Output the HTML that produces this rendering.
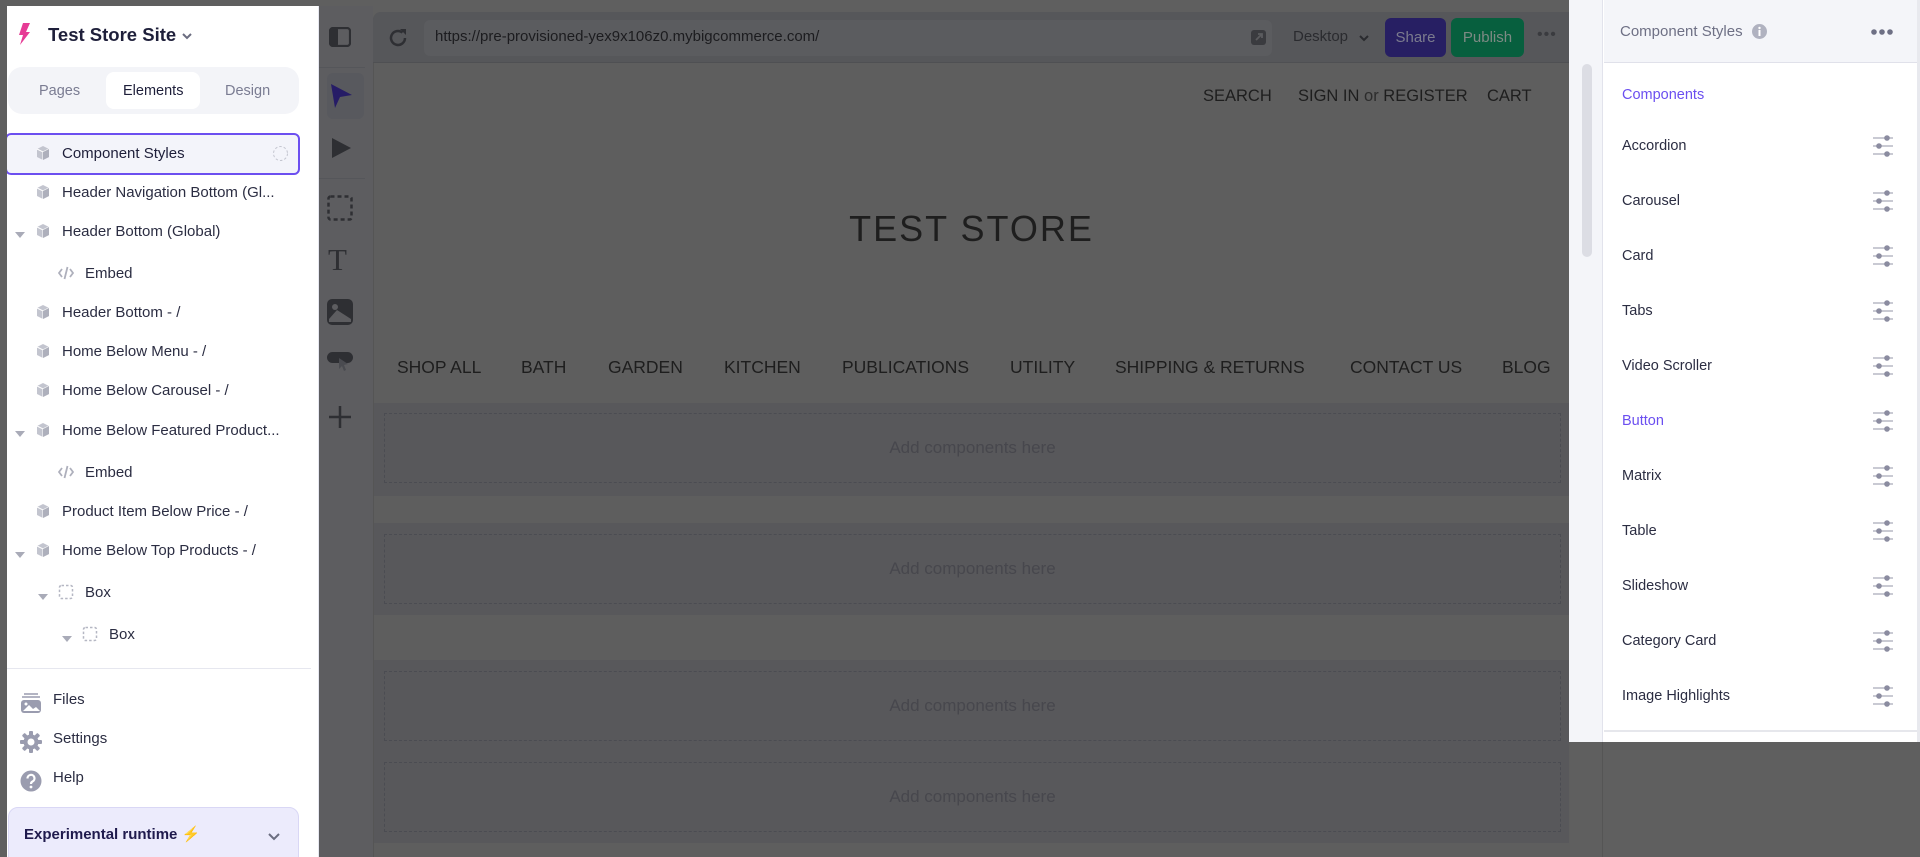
<!DOCTYPE html>
<html style="overflow:hidden;height:857px"><head><meta charset="utf-8"><style>
*{box-sizing:border-box;margin:0;padding:0}
body{width:1920px;height:857px;overflow:hidden;background:#5f5f5f;font-family:"Liberation Sans",sans-serif;position:relative}
.a{position:absolute;white-space:nowrap}
#left{position:absolute;left:7px;top:6px;width:312px;height:851px;background:#fff;border-right:1px solid #e6e7f0;overflow:hidden}
.tree{color:#2b2d42;font-size:15px}
.cube{position:absolute;width:16px;height:16px}
.tri{position:absolute;width:0;height:0;border-left:5px solid transparent;border-right:5px solid transparent;border-top:6px solid #a9abb8}
.nav{font-size:17.5px;color:#1e1e1e;top:357px}
.sec{position:absolute;left:374px;width:1195px;background:#58585b}
.dash{position:absolute;left:384px;width:1177px;height:70px;border:1px dashed #4b4c52;color:#47474d;font-size:17px;text-align:center;line-height:68px}
.ri{position:absolute;left:1622px;font-size:14.5px;color:#2b2d42}
.sl{position:absolute;left:1872px;width:22px;height:22px}
</style></head><body>
<svg width="0" height="0" style="position:absolute"><defs>
<symbol id="cube" viewBox="0 0 16 16"><path d="M8 1l6 3v8l-6 3-6-3V4z" fill="#c3c5cf"/><path d="M2 4l6 3 6-3" fill="none" stroke="#fff" stroke-width="1"/><path d="M8 7v8" stroke="#fff" stroke-width="1"/><path d="M8 7l6-3v8l-6 3z" fill="#aeb0bc"/></symbol>
<symbol id="sl" viewBox="0 0 22 22"><g stroke="#c9cad3" stroke-width="2"><path d="M1 3h20M1 11h20M1 19h20"/></g><g fill="#8b8ca0"><circle cx="15" cy="3" r="2.8"/><circle cx="7" cy="11" r="2.8"/><circle cx="15" cy="19" r="2.8"/></g></symbol>
<symbol id="embed" viewBox="0 0 16 16"><path d="M4 4L1 8l3 4M12 4l3 4-3 4M9.5 2L6.5 14" fill="none" stroke="#aeb0bc" stroke-width="1.8"/></symbol>
<symbol id="box" viewBox="0 0 16 16"><rect x="1.5" y="1.5" width="13" height="13" rx="2" fill="none" stroke="#b5b7c3" stroke-width="1.5" stroke-dasharray="2.5 2"/></symbol>
</defs></svg>

<!-- canvas area -->
<div class="a" style="left:373px;top:12px;width:1197px;height:845px;background:#5e5e5e;border-radius:8px 0 0 0;border-left:1px solid #555"></div>
<div class="a" style="left:373px;top:12px;width:1197px;height:51px;background:#56575a;border-radius:8px 0 0 0;border-bottom:1px solid #4f5053"></div>
<svg class="a" style="left:386px;top:26px" width="24" height="24" viewBox="0 0 24 24"><path d="M19 12a7 7 0 1 1-2.5-5.4" fill="none" stroke="#2e2f33" stroke-width="2.5"/><path d="M14 3h6v6z" fill="#2e2f33"/></svg>
<div class="a" style="left:424px;top:20px;width:848px;height:36px;background:#5b5c5f;border-radius:6px"></div>
<div class="a" style="left:435px;top:28px;font-size:15px;color:#1c1c1f">https://pre-provisioned-yex9x106z0.mybigcommerce.com/</div>
<svg class="a" style="left:1250px;top:29px" width="17" height="17" viewBox="0 0 17 17"><rect x="1" y="1" width="15" height="15" rx="3" fill="#3a3b3f"/><path d="M6 11l6-6M8 5h4v4" stroke="#5b5c5f" stroke-width="1.8" fill="none"/></svg>
<div class="a" style="left:1293px;top:28px;font-size:15px;color:#2a2b2f">Desktop</div>
<svg class="a" style="left:1358px;top:33px" width="12" height="10" viewBox="0 0 12 10"><path d="M2 3l4 4 4-4" stroke="#2a2b2f" stroke-width="2" fill="none"/></svg>
<div class="a" style="left:1385px;top:18px;width:61px;height:39px;background:#271f63;border-radius:6px;color:#7b7b8e;font-size:15px;text-align:center;line-height:39px">Share</div>
<div class="a" style="left:1451px;top:18px;width:73px;height:39px;background:#075f3e;border-radius:6px;color:#7d8a84;font-size:15px;text-align:center;line-height:39px">Publish</div>
<div class="a" style="left:1537px;top:26px;font-size:16px;color:#3a3b3f;letter-spacing:1px">•••</div>

<div class="a" style="left:1203px;top:87px;font-size:16.5px;color:#1e1e1e">SEARCH</div>
<div class="a" style="left:1298px;top:87px;font-size:16.5px;color:#1e1e1e">SIGN IN <span style="color:#2c2c2c">or</span> REGISTER</div>
<div class="a" style="left:1487px;top:87px;font-size:16.5px;color:#1e1e1e">CART</div>
<div class="a" style="left:373px;width:1197px;top:208px;text-align:center;font-size:36px;letter-spacing:2px;color:#1e1e1e">TEST STORE</div>
<div class="a nav" style="left:397px">SHOP ALL</div>
<div class="a nav" style="left:521px">BATH</div>
<div class="a nav" style="left:608px">GARDEN</div>
<div class="a nav" style="left:724px">KITCHEN</div>
<div class="a nav" style="left:842px">PUBLICATIONS</div>
<div class="a nav" style="left:1010px">UTILITY</div>
<div class="a nav" style="left:1115px">SHIPPING &amp; RETURNS</div>
<div class="a nav" style="left:1350px">CONTACT US</div>
<div class="a nav" style="left:1502px">BLOG</div>

<div class="sec" style="top:403px;height:93px"></div>
<div class="sec" style="top:523px;height:92px"></div>
<div class="sec" style="top:660px;height:183px"></div>
<div class="dash" style="top:413px">Add components here</div>
<div class="dash" style="top:534px">Add components here</div>
<div class="dash" style="top:671px">Add components here</div>
<div class="dash" style="top:762px">Add components here</div>

<!-- toolbar -->
<div class="a" style="left:319px;top:6px;width:54px;height:851px;background:#5d5d60"></div>
<svg class="a" style="left:329px;top:27px" width="22" height="20" viewBox="0 0 22 20"><rect x="1" y="1" width="20" height="18" rx="3" fill="none" stroke="#2e2f33" stroke-width="2.2"/><rect x="1" y="1" width="8" height="18" rx="2" fill="#2e2f33"/></svg>
<div class="a" style="left:319px;top:67px;width:46px;height:1px;background:#55565a"></div>
<div class="a" style="left:327px;top:73px;width:37px;height:46px;background:#58595e;border-radius:6px"></div>
<svg class="a" style="left:329px;top:83px" width="24" height="26" viewBox="0 0 24 26"><path d="M2 1l21 11-12 2-5 11z" fill="#261c66"/></svg>
<svg class="a" style="left:331px;top:137px" width="20" height="22" viewBox="0 0 20 22"><path d="M1 1l19 10L1 21z" fill="#2e2f33"/></svg>
<div class="a" style="left:319px;top:178px;width:46px;height:1px;background:#55565a"></div>
<svg class="a" style="left:327px;top:195px" width="26" height="26"><rect x="1.5" y="1.5" width="23" height="23" rx="2" fill="none" stroke="#2e2f33" stroke-width="2.5" stroke-dasharray="4 3"/></svg>
<div class="a" style="left:328px;top:242px;font-family:'Liberation Serif',serif;font-size:31px;color:#2e2f33">T</div>
<svg class="a" style="left:327px;top:299px" width="26" height="26" viewBox="0 0 26 26"><rect x="0" y="0" width="26" height="26" rx="5" fill="#2e2f33"/><path d="M2 20l8-9 14 9v3H2z" fill="#5d5d60"/><circle cx="8" cy="8" r="3" fill="#5d5d60"/></svg>
<svg class="a" style="left:327px;top:352px" width="26" height="24" viewBox="0 0 26 24"><rect x="0" y="0" width="26" height="11" rx="5.5" fill="#2e2f33"/><path d="M12 6l9 6-4 1 2 5-2 1-2-5-3 3z" fill="#4a4b50"/></svg>
<svg class="a" style="left:328px;top:405px" width="24" height="24"><path d="M12 1v22M1 12h22" stroke="#2e2f33" stroke-width="2.5"/></svg>

<!-- left panel -->
<div id="left">
<svg class="a" style="left:10px;top:17px" width="14" height="22" viewBox="0 0 14 22"><path d="M6 0h7L9 9h4L3 22l3-10H2z" fill="#e63b95"/></svg>
<div class="a" style="left:41px;top:18px;font-size:18.5px;color:#1e1f3a;font-weight:bold">Test Store Site</div>
<svg class="a" style="left:174px;top:26px" width="12" height="9" viewBox="0 0 12 9"><path d="M2 2l4 4 4-4" stroke="#6b6d80" stroke-width="2" fill="none"/></svg>
<div class="a" style="left:1px;top:61px;width:291px;height:47px;background:#f3f4f8;border-radius:14px"></div>
<div class="a" style="left:99px;top:66px;width:94px;height:37px;background:#fff;border-radius:8px"></div>
<div class="a" style="left:32px;top:77px;font-size:14.5px;color:#7a7c92">Pages</div>
<div class="a" style="left:116px;top:77px;font-size:14.5px;color:#1e1f3a">Elements</div>
<div class="a" style="left:218px;top:77px;font-size:14.5px;color:#7a7c92">Design</div>

<div class="a" style="left:-2px;top:127px;width:295px;height:42px;background:#f3f4fa;border:2px solid #6c4ff0;border-radius:6px"></div>
<svg class="a" style="left:265px;top:139px" width="17" height="17"><circle cx="8.5" cy="8.5" r="7" fill="none" stroke="#c4c6d0" stroke-dasharray="2.5 2"/></svg>

<div class="tree">
<svg class="cube" style="left:28px;top:139px"><use href="#cube"/></svg><div class="a" style="left:55px;top:139px;color:#1e1f3a">Component Styles</div>
<svg class="cube" style="left:28px;top:178px"><use href="#cube"/></svg><div class="a" style="left:55px;top:178px">Header Navigation Bottom (Gl...</div>
<div class="tri" style="left:8px;top:226px"></div><svg class="cube" style="left:28px;top:217px"><use href="#cube"/></svg><div class="a" style="left:55px;top:217px">Header Bottom (Global)</div>
<svg class="cube" style="left:51px;top:259px"><use href="#embed"/></svg><div class="a" style="left:78px;top:259px">Embed</div>
<svg class="cube" style="left:28px;top:298px"><use href="#cube"/></svg><div class="a" style="left:55px;top:298px">Header Bottom - /</div>
<svg class="cube" style="left:28px;top:337px"><use href="#cube"/></svg><div class="a" style="left:55px;top:337px">Home Below Menu - /</div>
<svg class="cube" style="left:28px;top:376px"><use href="#cube"/></svg><div class="a" style="left:55px;top:376px">Home Below Carousel - /</div>
<div class="tri" style="left:8px;top:425px"></div><svg class="cube" style="left:28px;top:416px"><use href="#cube"/></svg><div class="a" style="left:55px;top:416px">Home Below Featured Product...</div>
<svg class="cube" style="left:51px;top:458px"><use href="#embed"/></svg><div class="a" style="left:78px;top:458px">Embed</div>
<svg class="cube" style="left:28px;top:497px"><use href="#cube"/></svg><div class="a" style="left:55px;top:497px">Product Item Below Price - /</div>
<div class="tri" style="left:8px;top:546px"></div><svg class="cube" style="left:28px;top:536px"><use href="#cube"/></svg><div class="a" style="left:55px;top:536px">Home Below Top Products - /</div>
<div class="tri" style="left:31px;top:588px"></div><svg class="cube" style="left:51px;top:578px"><use href="#box"/></svg><div class="a" style="left:78px;top:578px">Box</div>
<div class="tri" style="left:55px;top:630px"></div><svg class="cube" style="left:75px;top:620px"><use href="#box"/></svg><div class="a" style="left:102px;top:620px">Box</div>
</div>

<div class="a" style="left:0;top:662px;width:304px;height:1px;background:#e6e7ef"></div>
<svg class="a" style="left:13px;top:686px" width="22" height="22" viewBox="0 0 22 22"><path d="M4 2h14M2 5h18" stroke="#9a9caf" stroke-width="1.5"/><rect x="1" y="8" width="20" height="13" rx="3" fill="#9a9caf"/><path d="M3 19l6-6 4 4 3-2 4 4z" fill="#fff"/><circle cx="6" cy="12" r="1.5" fill="#fff"/></svg>
<div class="a" style="left:46px;top:685px;font-size:15px;color:#2b2d42">Files</div>
<svg class="a" style="left:13px;top:725px" width="22" height="22" viewBox="0 0 22 22"><g fill="#9a9caf"><circle cx="11" cy="11" r="7.5"/><rect x="9" y="0" width="4" height="22" rx="1"/><rect x="0" y="9" width="22" height="4" rx="1"/><rect x="9" y="0" width="4" height="22" rx="1" transform="rotate(45 11 11)"/><rect x="9" y="0" width="4" height="22" rx="1" transform="rotate(-45 11 11)"/></g><circle cx="11" cy="11" r="3.5" fill="#fff"/></svg>
<div class="a" style="left:46px;top:724px;font-size:15px;color:#2b2d42">Settings</div>
<svg class="a" style="left:13px;top:764px" width="22" height="22" viewBox="0 0 22 22"><circle cx="11" cy="11" r="10.5" fill="#9a9caf"/><path d="M7.5 8.5a3.5 3.5 0 1 1 5 3c-1.2.6-1.5 1.2-1.5 2.5" stroke="#fff" stroke-width="2.2" fill="none"/><circle cx="11" cy="17" r="1.4" fill="#fff"/></svg>
<div class="a" style="left:46px;top:763px;font-size:15px;color:#2b2d42">Help</div>
<div class="a" style="left:1px;top:801px;width:291px;height:60px;background:#ecebfc;border:1px solid #d9d7f5;border-radius:10px"></div>
<div class="a" style="left:17px;top:819px;font-size:15px;font-weight:bold;color:#1f1a4d">Experimental runtime <span style="color:#f5b82e;font-weight:normal">⚡</span></div>
<svg class="a" style="left:260px;top:826px" width="14" height="10" viewBox="0 0 14 10"><path d="M2 2l5 5 5-5" stroke="#6b6d80" stroke-width="2" fill="none"/></svg>
</div>

<!-- right panel -->
<div class="a" style="left:1569px;top:0;width:351px;height:742px;background:#fff"></div>
<div class="a" style="left:1569px;top:0;width:34px;height:742px;background:#f4f5f9;border-right:1px solid #e2e3ec"></div>
<div class="a" style="left:1582px;top:64px;width:10px;height:193px;background:#dcdde4;border-radius:5px"></div>
<div class="a" style="left:1604px;top:0;width:313px;height:63px;background:#f4f5f9;border-bottom:1px solid #e0e1ea"></div>
<div class="a" style="left:1620px;top:23px;font-size:15px;color:#6e7085">Component Styles</div>
<svg class="a" style="left:1752px;top:24px" width="15" height="15"><circle cx="7.5" cy="7.5" r="7.5" fill="#b0b2c0"/><rect x="6.5" y="6" width="2" height="6" fill="#fff"/><circle cx="7.5" cy="4" r="1.2" fill="#fff"/></svg>
<svg class="a" style="left:1871px;top:28px" width="22" height="8"><g fill="#6e7085"><circle cx="3" cy="4" r="2.8"/><circle cx="11" cy="4" r="2.8"/><circle cx="19" cy="4" r="2.8"/></g></svg>
<div class="a" style="left:1917px;top:0;width:3px;height:742px;background:#e8e9ee"></div>
<div class="ri" style="top:87px;color:#6b4ff0">Components</div>
<div class="ri" style="top:138px">Accordion</div>
<div class="ri" style="top:193px">Carousel</div>
<div class="ri" style="top:248px">Card</div>
<div class="ri" style="top:303px">Tabs</div>
<div class="ri" style="top:358px">Video Scroller</div>
<div class="ri" style="top:413px;color:#6b4ff0">Button</div>
<div class="ri" style="top:468px">Matrix</div>
<div class="ri" style="top:523px">Table</div>
<div class="ri" style="top:578px">Slideshow</div>
<div class="ri" style="top:633px">Category Card</div>
<div class="ri" style="top:688px">Image Highlights</div>
<svg class="sl" style="top:135px"><use href="#sl"/></svg>
<svg class="sl" style="top:190px"><use href="#sl"/></svg>
<svg class="sl" style="top:245px"><use href="#sl"/></svg>
<svg class="sl" style="top:300px"><use href="#sl"/></svg>
<svg class="sl" style="top:355px"><use href="#sl"/></svg>
<svg class="sl" style="top:410px"><use href="#sl"/></svg>
<svg class="sl" style="top:465px"><use href="#sl"/></svg>
<svg class="sl" style="top:520px"><use href="#sl"/></svg>
<svg class="sl" style="top:575px"><use href="#sl"/></svg>
<svg class="sl" style="top:630px"><use href="#sl"/></svg>
<svg class="sl" style="top:685px"><use href="#sl"/></svg>
<div class="a" style="left:1604px;top:730px;width:313px;height:2px;background:#e6e7ec"></div>
<div class="a" style="left:1602px;top:742px;width:1px;height:115px;background:#555"></div>
</body></html>
